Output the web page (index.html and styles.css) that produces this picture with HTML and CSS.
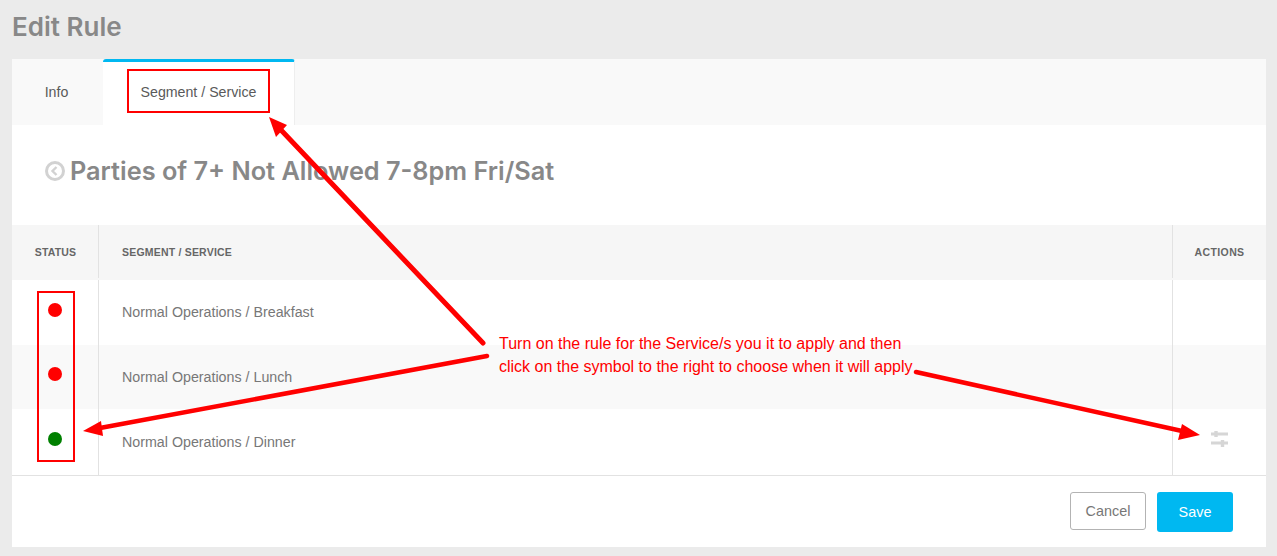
FILE: index.html
```html
<!DOCTYPE html>
<html lang="en">
<head>
<meta charset="utf-8">
<title>Edit Rule</title>
<link rel="stylesheet" href="styles.css">
</head>
<body>
<h1 class="page-title">Edit Rule</h1>
<main class="card">
  <nav class="tabs">
    <div class="tab">Info</div>
    <div class="tab tab-active">Segment / Service</div>
  </nav>
  <h2 class="rule-title">
    <svg class="back-icon" width="20" height="20" viewBox="0 0 20 20"><circle cx="10" cy="10" r="8.5" fill="none" stroke="#d2d2d2" stroke-width="3"/><path d="M11.5 6 L7.5 10 L11.5 14" fill="none" stroke="#d2d2d2" stroke-width="2.4"/></svg>
    <span>Parties of 7+ Not Allowed 7-8pm Fri/Sat</span>
  </h2>
  <div class="table">
    <div class="row head">
      <div class="c-status">STATUS</div>
      <div class="c-name">SEGMENT / SERVICE</div>
      <div class="c-actions">ACTIONS</div>
    </div>
    <div class="row r1">
      <div class="c-status"><i class="dot red"></i></div>
      <div class="c-name">Normal Operations / Breakfast</div>
      <div class="c-actions"></div>
    </div>
    <div class="row r2 alt">
      <div class="c-status"><i class="dot red"></i></div>
      <div class="c-name">Normal Operations / Lunch</div>
      <div class="c-actions"></div>
    </div>
    <div class="row r3">
      <div class="c-status"><i class="dot green"></i></div>
      <div class="c-name">Normal Operations / Dinner</div>
      <div class="c-actions">
        <svg class="sliders" width="17" height="16" viewBox="0 0 17 16"><path d="M0 3H17M0 12H17" stroke="#d6d6d6" stroke-width="3"/><path d="M5 0V6M11.5 9V16" stroke="#d6d6d6" stroke-width="3.4"/></svg>
      </div>
    </div>
  </div>
  <footer class="actions">
    <button class="btn btn-cancel">Cancel</button>
    <button class="btn btn-save">Save</button>
  </footer>
</main>
<div class="mark mark-tab"></div>
<div class="mark mark-status"></div>
<p class="note">Turn on the rule for the Service/s you it to apply and then<br>click on the symbol to the right to choose when it will apply</p>
<svg class="arrows" width="1277" height="556" viewBox="0 0 1277 556">
  <g stroke="#f00" stroke-linecap="round" fill="none">
    <path d="M483 343 L281 130" stroke-width="5"/>
    <path d="M487 356 L100 428" stroke-width="4.5"/>
    <path d="M916 372 L1182 431" stroke-width="4.5"/>
  </g>
  <g fill="#f00">
    <path d="M269 117 L287 125 L276 137 Z"/>
    <path d="M83 431 L101 421 L103 436 Z"/>
    <path d="M1200 435 L1182 424 L1178 440 Z"/>
  </g>
</svg>
</body>
</html>
```
FILE: styles.css
```css
* { box-sizing: border-box; }
html, body { margin: 0; height: 556px; overflow: hidden; }
body {
  background: #ebebeb;
  font-family: "Liberation Sans", Arial, sans-serif;
  color: #666;
  padding: 12px 11px 9px 12px;
  position: relative;
}
.page-title {
  margin: 0 0 15px;
  height: 32px;
  line-height: 30px;
  font-family: Inter, sans-serif;
  font-size: 26px;
  font-weight: 600;
  color: #888;
}
.card {
  background: #fff;
  height: 488px;
  display: flex;
  flex-direction: column;
}
.tabs {
  display: flex;
  height: 66px;
  background: #f9f9f9;
  font-size: 14.2px;
  color: #5a5a5a;
}
.tab {
  width: 91px;
  display: flex;
  align-items: center;
  justify-content: center;
  padding-right: 2px;
}
.tab-active {
  width: 192px;
  background: #fff;
  border-top: 3px solid #00b8f1;
  border-radius: 3px 3px 0 0;
  border-right: 1px solid #eee;
  padding-right: 0;
  padding-bottom: 4px;
}
.rule-title {
  margin: 0;
  height: 100px;
  padding: 0 0 9px 33px;
  display: flex;
  align-items: center;
  gap: 5px;
  font-family: Inter, sans-serif;
  font-size: 25.3px;
  font-weight: 600;
  color: #888;
}
.back-icon { margin-top: 0; }
.table { display: flex; flex-direction: column; flex: 1; }
.row { display: flex; font-size: 14.25px; color: #777; }
.row > div { display: flex; align-items: center; }
.head { height: 55px; padding-bottom: 2px; background: #f6f6f6; font-size: 10.5px; font-weight: 700; color: #666; letter-spacing: 0.2px; }
.head .c-actions { letter-spacing: 0.4px; }
.r1 { height: 65px; }
.r1 .c-name { padding-bottom: 1px; }
.r2 { height: 64px; }
.r3 { height: 67px; border-bottom: 1px solid #e2e2e2; }
.alt { background: #f9f9f9; }
.c-status { width: 87px; justify-content: center; border-right: 1px solid #e2e2e2; }
.head .c-status { padding-left: 1px; }
.c-name { flex: 1; padding-left: 23px; }
.c-actions { width: 94px; justify-content: center; border-left: 1px solid #e2e2e2; }
.dot { display: block; width: 14px; height: 14px; border-radius: 50%; margin: -5px 0 0 0; }
.r2 .dot, .r3 .dot { margin-top: -6px; }
.red { background: #f00; }
.green { background: #008000; }
.sliders { margin-top: -6px; }
.actions {
  height: 70px;
  display: flex;
  justify-content: flex-end;
  align-items: flex-start;
  gap: 11px;
  padding: 15px 33px 0 0;
}
.btn {
  width: 76px;
  font-family: "Liberation Sans", Arial, sans-serif;
  font-size: 14.4px;
  border-radius: 3px;
  padding: 0;
}
.btn-cancel { height: 38px; background: #fff; border: 1px solid #b3b3b3; color: #777; }
.btn-save { height: 40px; background: #00b8f1; border: 0; color: #fff; }
.mark { position: absolute; border: 2px solid #f00; }
.mark-tab { left: 127px; top: 69px; width: 143px; height: 44px; }
.mark-status { left: 37px; top: 291px; width: 38px; height: 171px; }
.note {
  position: absolute;
  left: 499px;
  top: 332px;
  margin: 0;
  font-size: 16px;
  line-height: 23px;
  color: #f00;
  white-space: nowrap;
}
.arrows { position: absolute; left: 0; top: 0; pointer-events: none; }
```
